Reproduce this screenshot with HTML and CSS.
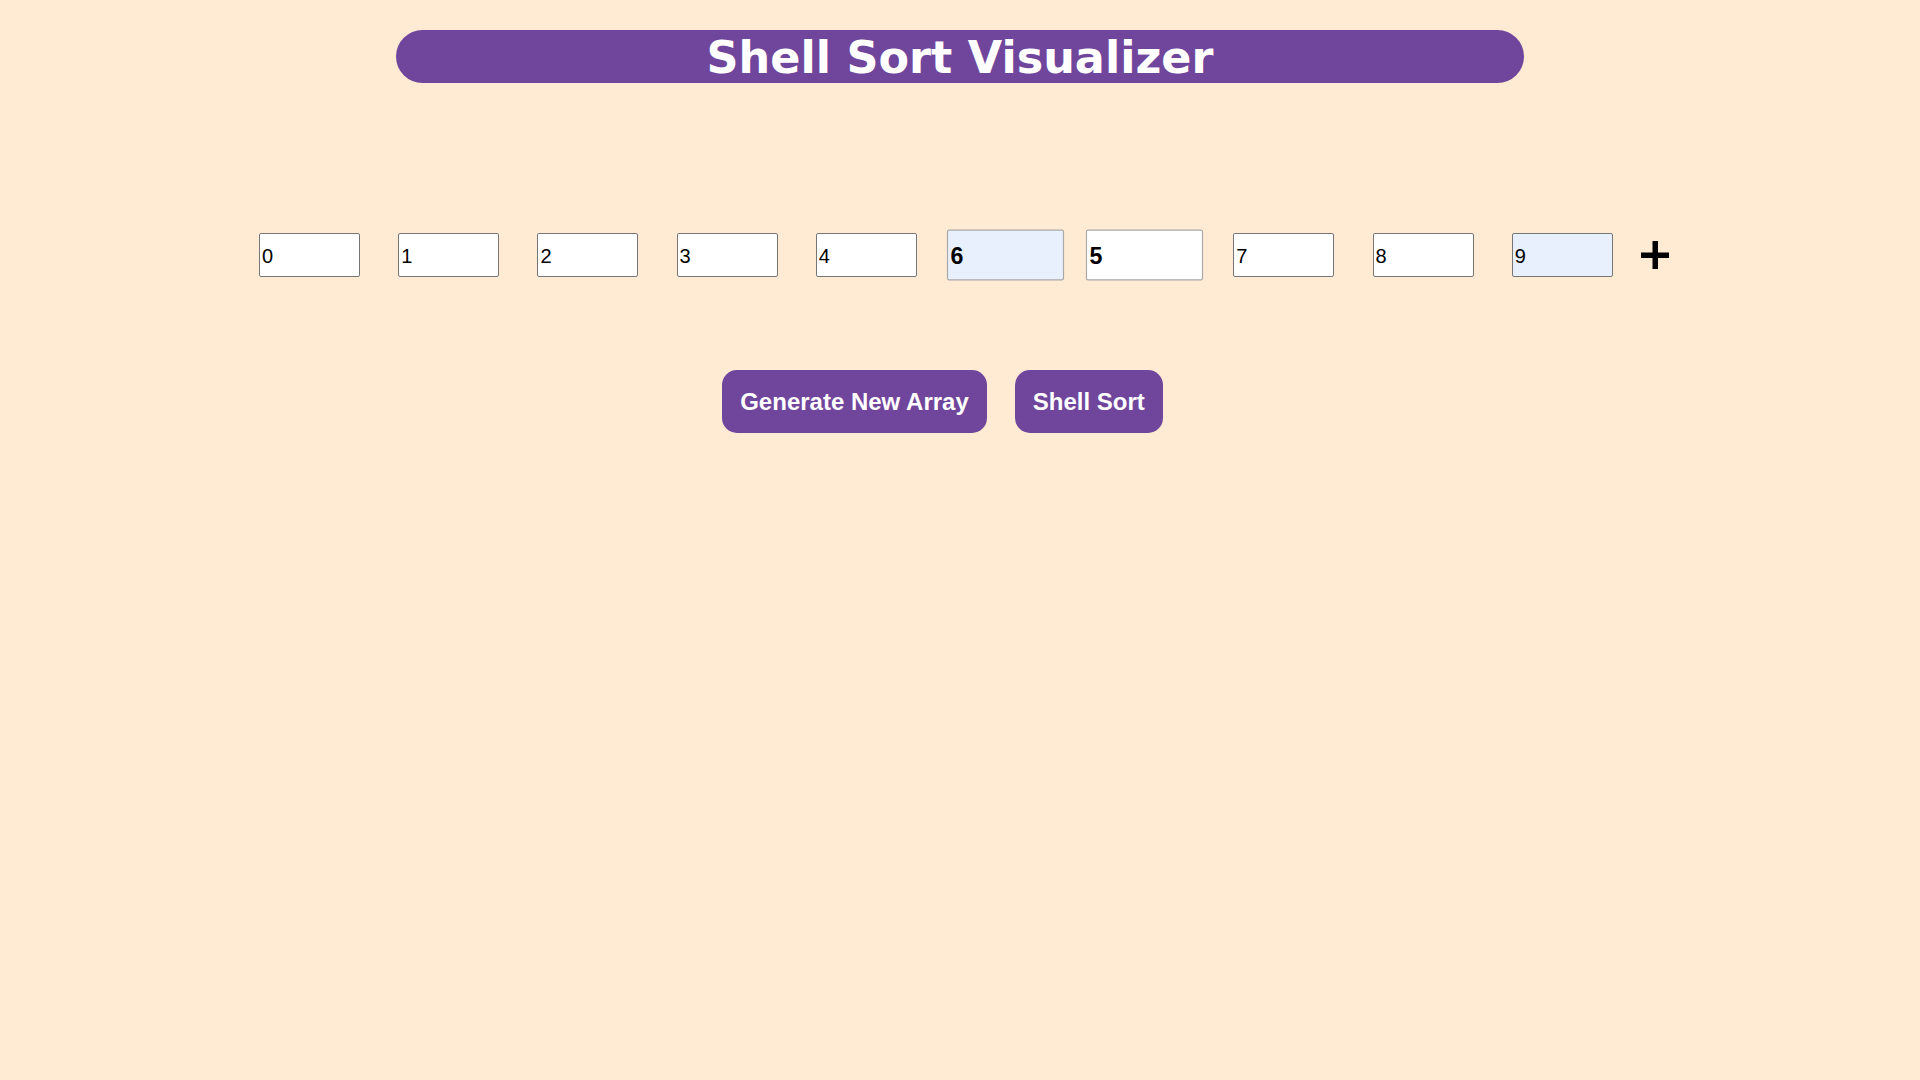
FILE: index.html
```html
<!DOCTYPE html>
<html lang="en">
<head>
<meta charset="utf-8">
<title>Shell Sort Visualizer</title>
<link rel="stylesheet" href="styles.css">
</head>
<body>
  <h1 class="title">Shell Sort Visualizer</h1>
  <div class="array-row">
    <input class="cell" type="text" value="0">
    <input class="cell" type="text" value="1">
    <input class="cell" type="text" value="2">
    <input class="cell" type="text" value="3">
    <input class="cell" type="text" value="4">
    <input class="cell cell-active cell-tint" type="text" value="6">
    <input class="cell cell-active" type="text" value="5">
    <input class="cell" type="text" value="7">
    <input class="cell" type="text" value="8">
    <input class="cell cell-tint" type="text" value="9">
    <button class="add-btn" type="button" aria-label="Add element">
      <svg width="30" height="30" viewBox="0 0 30 30">
        <rect x="12.5" y="1" width="5.5" height="28" fill="#000"/>
        <rect x="1" y="12.5" width="28" height="5.5" fill="#000"/>
      </svg>
    </button>
  </div>
  <div class="actions">
    <button class="action" type="button">Generate New Array</button>
    <button class="action" type="button">Shell Sort</button>
  </div>
</body>
</html>
```

FILE: styles.css
```css
html, body {
  margin: 0;
  padding: 0;
}

body {
  background: #ffead4;
  font-family: "Liberation Sans", Arial, sans-serif;
  min-height: 100vh;
}

.title {
  box-sizing: border-box;
  width: 1128px;
  height: 53px;
  margin: 30px auto 0;
  padding-top: 2px;
  border-radius: 27px;
  background: #70459c;
  color: #ffffff;
  text-align: center;
  font-family: "DejaVu Sans", Verdana, sans-serif;
  font-weight: bold;
  font-size: 44.5px;
  line-height: 51px;
}

.array-row {
  display: flex;
  align-items: center;
  gap: 38.2px;
  margin-top: 150px;
  padding-left: 259px;
  height: 44px;
}

.cell {
  box-sizing: border-box;
  width: 101px;
  height: 44px;
  margin: 0;
  padding: 2px 2px 0;
  border: 1px solid #767676;
  border-radius: 2px;
  background: #ffffff;
  color: #000000;
  font-family: "Liberation Sans", Arial, sans-serif;
  font-size: 20px;
  outline: none;
}

.cell-tint {
  background: #e8f0fe;
}

.cell-active {
  font-weight: bold;
  transform: scale(1.16);
  border-color: #a8a8a8;
}

.add-btn {
  display: flex;
  align-items: center;
  justify-content: center;
  width: 30px;
  height: 30px;
  margin-left: -11px;
  padding: 0;
  border: none;
  background: transparent;
  cursor: pointer;
}

.actions {
  display: flex;
  justify-content: center;
  gap: 28px;
  margin-top: 93px;
  padding-right: 35px;
}

.action {
  height: 63px;
  padding: 0 18px;
  border: none;
  border-radius: 15px;
  background: #70459c;
  color: #ffffff;
  font-family: "Liberation Sans", Arial, sans-serif;
  font-weight: bold;
  font-size: 24px;
  cursor: pointer;
}
```
